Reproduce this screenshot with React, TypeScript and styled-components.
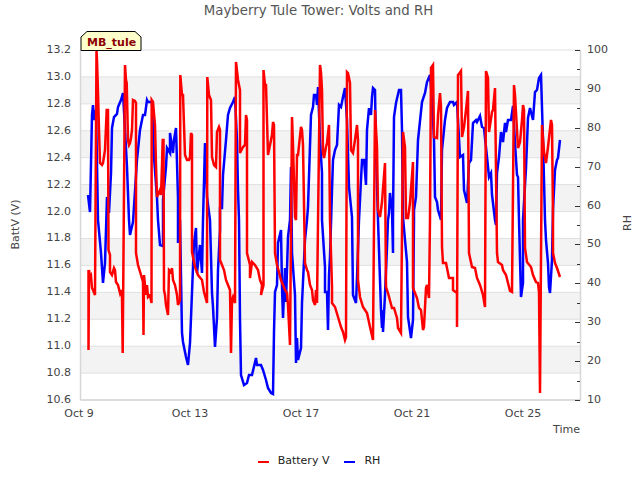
import React from "react";
import styled, { createGlobalStyle } from "styled-components";

const FONT = `"DejaVu Sans", "Liberation Sans", sans-serif`;

const Global = createGlobalStyle`
  html, body { margin: 0; padding: 0; background: #fff; }
`;

const Page = styled.div`
  width: 640px;
  height: 480px;
  display: flex;
  flex-direction: column;
  overflow: hidden;
  font-family: ${FONT};
`;

const Title = styled.h1`
  margin: 0;
  height: 20px;
  padding: 1px 3px 0 0;
  box-sizing: border-box;
  line-height: 20px;
  text-align: center;
  font-size: 13.3px;
  font-weight: 400;
  color: #555;
  white-space: nowrap;
`;

const Chart = styled.svg`
  display: block;
  width: 640px;
  height: 425px;
  flex: none;
`;

const Legend = styled.div`
  display: flex;
  justify-content: center;
  align-items: center;
  gap: 15px;
  height: 30px;
  padding-right: 2px;
`;

const LegendItem = styled.div`
  display: flex;
  align-items: center;
  gap: 9px;
  font-size: 11px;
  color: #222;
`;

const Swatch = styled.span<{ $color: string }>`
  display: block;
  width: 11px;
  height: 2px;
  margin-top: 3px;
  background: ${(p) => p.$color};
`;

const Band = styled.rect`
  fill: #f3f3f3;
`;
const GridLine = styled.line`
  stroke: #e0e0e0;
  stroke-width: 1;
`;
const AxisLine = styled.line`
  stroke: #d6d6d6;
  stroke-width: 1.5;
`;
const Tick = styled.line`
  stroke: #333;
  stroke-width: 1;
`;
const TickLabel = styled.text`
  font-family: ${FONT};
  font-size: 11px;
  fill: #444;
`;
const Series = styled.polyline`
  fill: none;
  stroke-width: 2.5;
  stroke-linejoin: miter;
`;
const TagShape = styled.path`
  fill: #ffffcc;
  stroke: #000;
  stroke-width: 1;
`;
const TagText = styled.text`
  font-family: ${FONT};
  font-size: 11px;
  font-weight: 700;
  fill: #8b0000;
`;

const red = [88.5,270,88.5,350,89,270,90,278,91,276,92,288,93,290,95,295,96.5,50,97,60,98,93,99,130,100,163,102,165,103,163,105,150,106.7,110,108,110,108.5,250,110,255,110,272,112,275,114,268,115,270,116,282,118,285,120,293,121,290,122,297,122.7,353,125,65,126,80,126.7,83,128,140,129,145,130,143,131,138,132,130,133,100,135,101,136,103,136,253,138,265,141,275,143,282,143.5,335,144,275,145,285,146,295,147,285,148,297,150,295,151.5,303,151.7,100,153,102,155,125,156,165,157,197,160,190,161,195,162,165,162.7,140,163.5,140,164,290,165,295,166,305,168,315,169,270,171,272,172,268,173,280,175,285,177,295,178,305,180,300,180.3,75,182,95,183,95,185,155,187,160,189,160,190,157,191,133,192,135,192,252,195,267,198,275,202,280,204,292,207,303,207.3,77,209,95,211,100,212,157,214,165,216,167,217,132,219,127,220,130,220,260,222,265,224,270,226,280,228,285,230,290,231,353,232,300,233,297,235,303,236,62,238,80,240,90,240,153,243,147,245,145,246,115,247,120,247,253,250,265,250,278,252,262,255,265,258,270,260,280,262,285,261,295,263.5,285,263.5,70,265,85,266,85,268,155,270,145,272,135,273,122,274,125,275,253,277,265,279,272,281,280,283,285,285,290,287,293,288,305,290,345,292,117,293,145,295,217,296,220,297,155,298,155,301,127,302,130,303,145,305,263,307,270,308,272,310,285,312,290,313,300,315,305,316,290,317,303,320,65,321,72,322,90,323,153,324,158,326,147,327,143,329,125,330,220,332,287,332,303,335,307,338,317,341,327,343,332,345,340,346,337,347,72,348,73,350,83,351,150,353,153,355,140,357,125,358,140,358,280,360,297,363,307,367,313,370,327,373,340,375,110,377,147,378,210,380,217,382,202,385,163,386,287,388,293,392,308,394,308,397,318,398,328,401,333,403,132,405,147,406,218,408,218,410,203,413,162,413,288,417,298,419,308,421,310,423,330,424,327,426,288,427,285,429,298,430,220,431,68,433,65,434,137,437,138,438,115,440,93,441,107,442,247,443,263,446,263,449,278,453,278,453,290,457,293,457,327,458,75,459,74,461,71,462,137,464,127,466,110,468,91,469,253,472,267,475,268,477,278,480,285,483,295,485,307,486,71,488,78,489,132,492,112,493,110,495,88,497,253,498,262,502,265,503,270,506,275,508,283,510,291,512,292,514,85,515,95,517,130,518,148,520,142,522,120,523,105,524,110,525,248,527,262,531,267,533,275,536,282,538,283,539,292,540,393,542,125,544,152,546,163,548,147,551,120,552,125,553,217,553,253,555,263,557,268,560,277];

const blue = [88,195,90,212,92,115,93,105,94,120,96,110,98,220,101,253,103,283,105,263,107,197,109,213,111,173,112,128,114,117,117,114,118,107,121,100,123,93,125,130,127,167,129,220,130,235,133,222,137,160,140,130,143,115,145,115,147,100,148,102,152,102,154,157,157,198,158,220,160,245,163,246,163,200,166,167,167,148,170,153,170,133,173,153,174,140,176,128,178,198,178,243,180,220,182,333,183,342,186,357,188,365,190,343,193,267,194,243,196,228,197,273,200,245,202,273,203,220,205,143,207,197,210,220,212,293,213,307,215,347,217,318,218,270,220,230,220,208,222,208,223,175,226,140,228,115,230,108,233,102,235,97,237,140,238,190,239,220,240,320,241,375,244,385,247,383,249,375,252,375,256,358,257,365,261,365,263,370,266,380,268,388,271,393,273,394,274,332,275,292,277,285,278,243,281,230,282,287,283,318,285,268,286,302,288,237,290,220,291,167,292,253,295,295,296,363,297,338,298,360,301,348,302,303,305,240,307,220,308,207,311,115,313,107,314,95,316,95,317,105,318,87,320,140,322,173,322,220,325,267,325,292,327,292,328,330,329,275,330,257,332,190,333,160,335,150,337,145,339,105,341,107,343,97,345,88,347,120,349,187,352,217,353,295,356,303,357,278,359,220,361,180,362,160,364,160,366,185,367,130,369,108,371,115,372,97,373,88,375,90,376,150,378,220,381,310,382,328,383,310,383,332,385,295,387,247,388,220,389,213,390,193,392,210,393,253,393,220,394,117,396,103,399,90,401,90,402,130,403,217,405,240,407,262,408,317,411,338,413,320,414,220,414,210,416,197,418,140,422,102,425,93,427,82,430,75,432,100,434,140,435,197,437,202,438,210,441,220,442,150,445,120,447,108,450,102,453,102,454,105,457,102,458,120,460,157,463,155,464,190,467,203,469,163,471,160,473,123,476,120,477,122,480,116,482,127,484,128,487,157,489,177,491,173,492,195,493,203,495,220,496,225,497,173,499,157,501,132,503,142,505,123,506,132,508,120,511,120,513,106,515,143,517,175,518,177,519,220,521,297,523,283,523,220,526,168,528,118,530,108,533,120,535,92,537,90,539,78,541,75,543,140,545,220,546,240,548,263,549,287,550,293,552,260,553,210,555,170,557,160,558,158,560,140];

const toPoints = (a: number[]) => {
  const out: string[] = [];
  for (let i = 0; i < a.length; i += 2) out.push(`${a[i]},${a[i + 1]}`);
  return out.join(" ");
};

const PLOT = { left: 80.5, right: 580.5, top: 50, bottom: 400 };
const step = 350 / 13;
const leftLabels = Array.from({ length: 14 }, (_, i) => (13.2 - i * 0.2).toFixed(1));
const rightMajor = [100, 90, 80, 70, 60, 50, 40, 30, 20, 10];
const rightMinor = [95, 85, 75, 65, 55, 45, 35, 25, 15];
const rhY = (v: number) => 400 - ((v - 10) * 350) / 90;
const xLabels = [
  { t: "Oct 9", x: 79 },
  { t: "Oct 13", x: 190 },
  { t: "Oct 17", x: 301 },
  { t: "Oct 21", x: 412 },
  { t: "Oct 25", x: 523 },
];

export default function App() {
  return (
    <Page>
      <Global />
      <Title>Mayberry Tule Tower: Volts and RH</Title>
      <Chart viewBox="0 20 640 425">
        {[1, 3, 5, 7, 9, 11].map((k) => (
          <Band key={k} x={PLOT.left} y={PLOT.top + k * step} width={500} height={step} />
        ))}
        {leftLabels.map((_, i) => (
          <GridLine key={i} x1={PLOT.left} x2={PLOT.right} y1={PLOT.top + i * step} y2={PLOT.top + i * step} />
        ))}
        <AxisLine x1={PLOT.left} x2={PLOT.left} y1={PLOT.top} y2={PLOT.bottom} />
        <AxisLine x1={PLOT.right} x2={PLOT.right} y1={PLOT.top} y2={PLOT.bottom} />
        <AxisLine x1={PLOT.left} x2={PLOT.right} y1={PLOT.bottom} y2={PLOT.bottom} />
        {rightMajor.map((v) => (
          <Tick key={v} x1={575} x2={580} y1={Math.round(rhY(v)) + 0.5} y2={Math.round(rhY(v)) + 0.5} />
        ))}
        {rightMinor.map((v) => (
          <Tick key={v} x1={577} x2={580} y1={Math.round(rhY(v)) + 0.5} y2={Math.round(rhY(v)) + 0.5} />
        ))}
        {leftLabels.map((t, i) => (
          <TickLabel key={t} x={71} y={PLOT.top + i * step + 3} textAnchor="end">{t}</TickLabel>
        ))}
        {rightMajor.map((v) => (
          <TickLabel key={v} x={587} y={rhY(v) + 3}>{v}</TickLabel>
        ))}
        {xLabels.map((l) => (
          <TickLabel key={l.t} x={l.x} y={417} textAnchor="middle">{l.t}</TickLabel>
        ))}
        <TickLabel x={553} y={433}>Time</TickLabel>
        <TickLabel transform="translate(19 224.5) rotate(-90)" textAnchor="middle">BattV (V)</TickLabel>
        <TickLabel transform="translate(631 223) rotate(-90)" textAnchor="middle">RH</TickLabel>
        <Series stroke="#0000ff" points={toPoints(blue)} />
        <Series stroke="#ff0000" points={toPoints(red)} />
        <TagShape d="M81 50.5 V37 L87 31.5 H135 L141 37 V50.5 Z" />
        <TagText x={87} y={46}>MB_tule</TagText>
      </Chart>
      <Legend>
        <LegendItem><Swatch $color="#ff0000" />Battery V</LegendItem>
        <LegendItem><Swatch $color="#0000ff" />RH</LegendItem>
      </Legend>
    </Page>
  );
}
